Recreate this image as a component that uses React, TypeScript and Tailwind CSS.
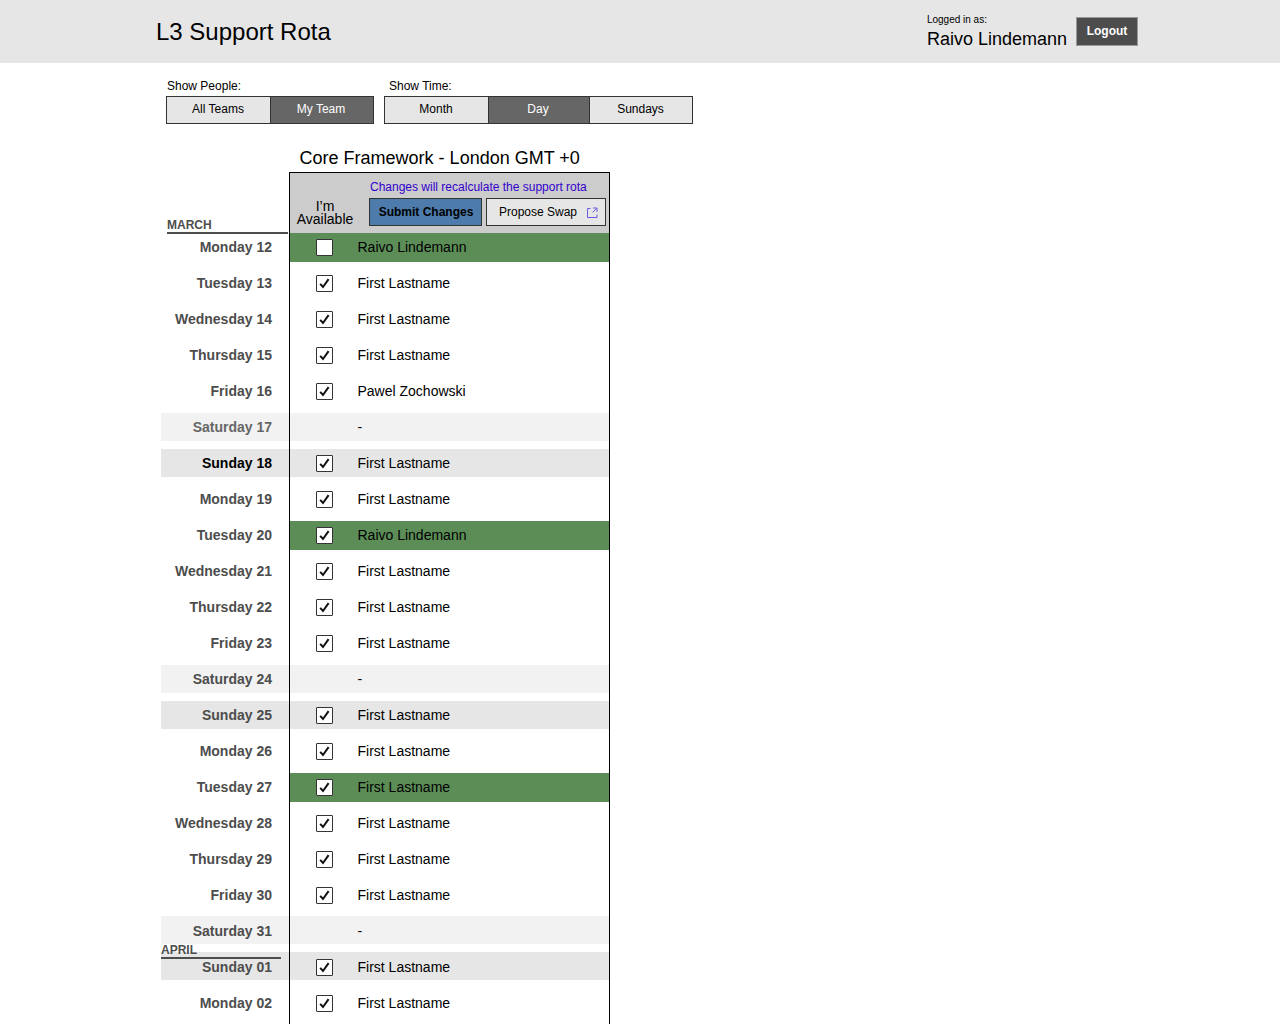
type Day = {
  label: string
  name: string
  checked?: boolean
  kind?: 'sat' | 'sun'
  mine?: boolean
  strong?: boolean
  muted?: boolean
  month?: string
  nudge?: boolean
}

const days: Day[] = [
  { label: 'Monday 12', name: 'Raivo Lindemann', mine: true, checked: false },
  { label: 'Tuesday 13', name: 'First Lastname' },
  { label: 'Wednesday 14', name: 'First Lastname' },
  { label: 'Thursday 15', name: 'First Lastname' },
  { label: 'Friday 16', name: 'Pawel Zochowski' },
  { label: 'Saturday 17', name: '-', kind: 'sat', muted: true },
  { label: 'Sunday 18', name: 'First Lastname', kind: 'sun', strong: true },
  { label: 'Monday 19', name: 'First Lastname' },
  { label: 'Tuesday 20', name: 'Raivo Lindemann', mine: true },
  { label: 'Wednesday 21', name: 'First Lastname' },
  { label: 'Thursday 22', name: 'First Lastname' },
  { label: 'Friday 23', name: 'First Lastname' },
  { label: 'Saturday 24', name: '-', kind: 'sat' },
  { label: 'Sunday 25', name: 'First Lastname', kind: 'sun' },
  { label: 'Monday 26', name: 'First Lastname' },
  { label: 'Tuesday 27', name: 'First Lastname', mine: true },
  { label: 'Wednesday 28', name: 'First Lastname' },
  { label: 'Thursday 29', name: 'First Lastname' },
  { label: 'Friday 30', name: 'First Lastname' },
  { label: 'Saturday 31', name: '-', kind: 'sat', nudge: true },
  { label: 'Sunday 01', name: 'First Lastname', kind: 'sun', month: 'APRIL', nudge: true },
  { label: 'Monday 02', name: 'First Lastname' },
]

function Segment({ label, active, width }: { label: string; active?: boolean; width: string }) {
  return (
    <button
      type="button"
      className={`h-full pb-[2px] text-xs ${width} ${active ? 'bg-[#666666] pr-[2px] text-white' : 'bg-[#e6e6e6] pr-px text-black'}`}
    >
      {label}
    </button>
  )
}

function Checkbox({ checked }: { checked: boolean }) {
  return (
    <span className="flex h-[17px] w-[17px] items-center justify-center rounded-[1px] border border-[#333333] bg-white">
      {checked ? (
        <svg width="13" height="13" viewBox="0 0 13 13" fill="none">
          <path d="M2.2 6.8 5 10 10.6 2.2" stroke="#111111" strokeWidth="2" />
        </svg>
      ) : null}
    </span>
  )
}

function Row({ day }: { day: Day }) {
  const rowBg = day.kind === 'sat' ? 'bg-[#f2f2f2]' : day.kind === 'sun' ? 'bg-[#e6e6e6]' : ''
  const labelColor = day.strong ? 'text-black' : day.muted ? 'text-[#666666]' : 'text-[#4d4d4d]'
  const cellBg = day.mine ? 'bg-[#5c8d57]' : rowBg
  const showBox = day.kind !== 'sat'
  const rowHeight = day.nudge ? '-mt-px h-[28px] pt-[2px]' : day.kind ? 'h-[28px]' : 'h-[29px]'
  const textOffset = day.kind ? '' : 'mb-[2px]'

  return (
    <div className="relative flex h-[36px]">
      <div className={`flex w-[128px] items-center justify-end pr-[17px] text-sm font-bold ${rowHeight} ${rowBg} ${labelColor}`}>
        <span className={textOffset}>{day.label}</span>
      </div>
      <div className="h-full w-[321px] border-x border-black">
        <div className={`flex items-center ${rowHeight} ${cellBg}`}>
          <div className="flex w-[67.5px] justify-center pl-[0.5px]">
            {showBox ? <Checkbox checked={day.checked !== false} /> : null}
          </div>
          <span className={`text-sm text-black ${textOffset}`}>{day.name}</span>
        </div>
      </div>
      {day.month ? (
        <div className="absolute left-0 top-[-10px] w-[120px] border-b-2 border-[#4d4d4d] text-xs leading-[14px] font-bold text-[#4d4d4d]">
          {day.month}
        </div>
      ) : null}
    </div>
  )
}

export default function App() {
  return (
    <div className="h-screen overflow-hidden bg-white font-['Liberation_Sans',Arial,sans-serif] text-black">
      <header className="flex h-[63px] items-center justify-between bg-[#e6e6e6] pl-[156px] pr-[142px]">
        <h1 className="text-2xl">L3 Support Rota</h1>
        <div className="flex items-center gap-[9px]">
          <div className="pt-px">
            <div className="text-[10px] leading-3">Logged in as:</div>
            <div className="mt-[2px] text-lg leading-[22px]">Raivo Lindemann</div>
          </div>
          <button
            type="button"
            className="h-[29px] w-[62px] border border-[#999999] bg-[#4d4d4d] pb-[2px] text-xs font-bold text-white"
          >
            Logout
          </button>
        </div>
      </header>

      <div className="flex gap-[10px] pl-[166px] pt-[15px]">
        <div>
          <div className="h-[18px] pl-px text-xs leading-[17px]">Show People:</div>
          <div className="flex h-[28px] w-[208px] divide-x divide-[#333333] border border-[#333333]">
            <Segment label="All Teams" width="w-[104px]" />
            <Segment label="My Team" active width="flex-1" />
          </div>
        </div>
        <div>
          <div className="h-[18px] pl-[5px] text-xs leading-[17px]">Show Time:</div>
          <div className="flex h-[28px] w-[309px] divide-x divide-[#333333] border border-[#333333]">
            <Segment label="Month" width="w-[104px]" />
            <Segment label="Day" active width="w-[101px]" />
            <Segment label="Sundays" width="flex-1" />
          </div>
        </div>
      </div>

      <div className="pl-[161px]">
        <div className="mt-[23px] pl-[138.6px] text-lg leading-[22px]">Core Framework - London GMT +0</div>

        <div className="mt-[3px] flex h-[62px]">
          <div className="flex w-[127px] items-end pl-[6px]">
            <div className="w-full border-b-2 border-[#4d4d4d] text-xs leading-[14px] font-bold text-[#4d4d4d]">
              MARCH
            </div>
          </div>
          <div className="ml-px flex w-[321px] border border-black bg-[#cccccc]">
            <div className="flex w-[69px] items-end justify-center pb-[7px] pl-px text-center text-sm leading-[13px]">
              <span>
                I’m
                <br />
                Available
              </span>
            </div>
            <div className="flex-1 pl-[10px]">
              <div className="mt-[7px] pl-px text-xs leading-[14px] text-[#3300cc]">
                Changes will recalculate the support rota
              </div>
              <div className="mt-[4px] flex gap-1">
                <button
                  type="button"
                  className="h-[28px] w-[113px] border border-[#333333] bg-[#4d7cac] pl-px text-xs font-bold text-black"
                >
                  Submit Changes
                </button>
                <button
                  type="button"
                  className="flex h-[28px] w-[120px] items-center border border-[#333333] bg-[#e6e6e6] pl-[12px] text-xs text-black"
                >
                  Propose Swap
                  <svg className="ml-[9px]" width="13" height="13" viewBox="0 0 13 13" fill="none" stroke="#6a5ce0">
                    <path d="M4.5 2.5H1.5v9h9.5V8.5M7 2h4v4M11 2 6.5 6.5" />
                  </svg>
                </button>
              </div>
            </div>
          </div>
        </div>

        <div className="mt-[-1px]">
          {days.map((day) => (
            <Row key={day.label} day={day} />
          ))}
        </div>
      </div>
    </div>
  )
}
